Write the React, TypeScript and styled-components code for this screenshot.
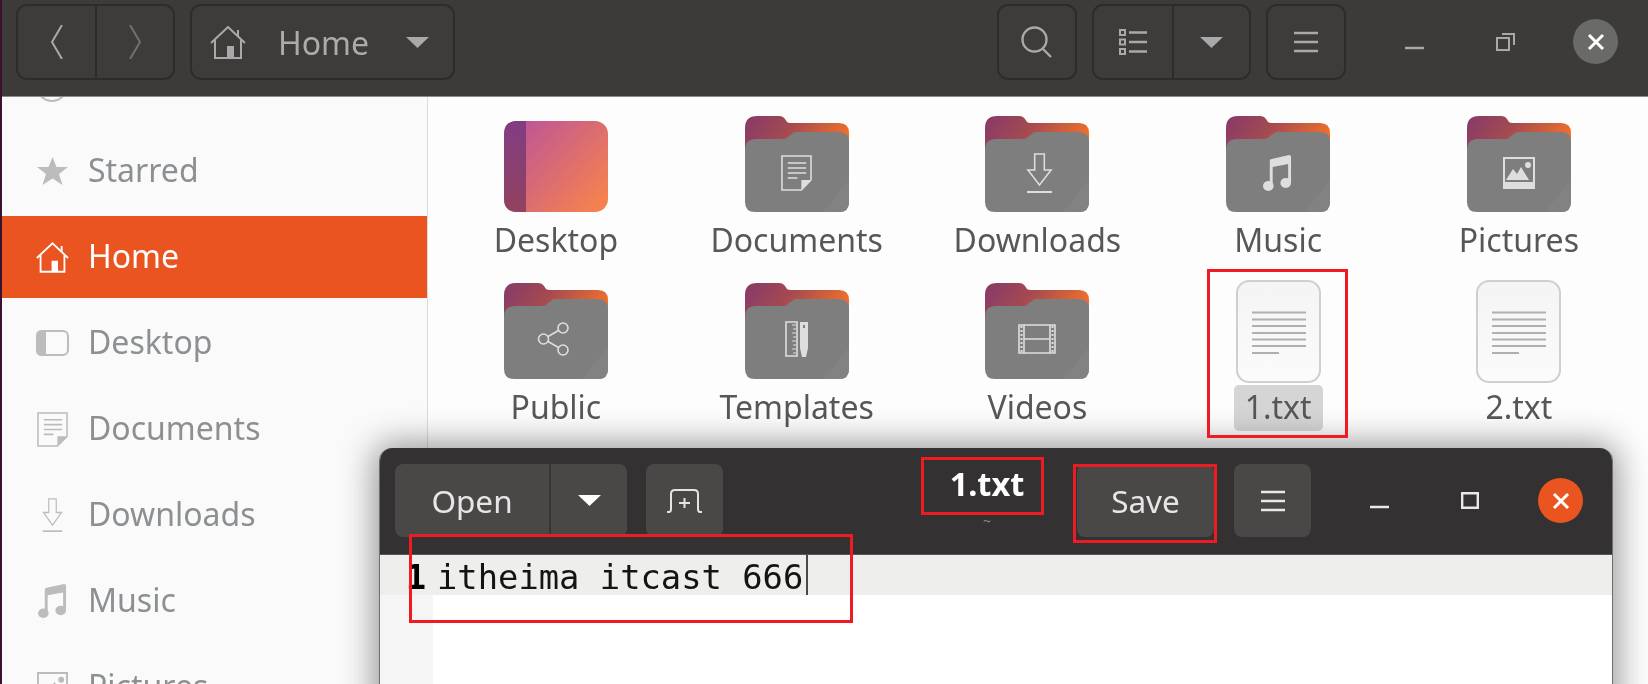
import React from "react";
import styled, { createGlobalStyle } from "styled-components";

const Global = createGlobalStyle`
  html, body { margin: 0; padding: 0; overflow: hidden; background: #fdfdfd; }
  * { box-sizing: border-box; }
`;

const Root = styled.div`
  position: relative;
  width: 1648px;
  height: 684px;
  overflow: hidden;
  display: flex;
  font-family: "Noto Sans", sans-serif;
  filter: blur(0.55px);
`;
const Strip = styled.div`
  width: 2px;
  flex: none;
  background: #3a1230;
`;
const Files = styled.div`
  flex: 1;
  display: flex;
  flex-direction: column;
  min-width: 0;
`;
const Header = styled.header`
  height: 97px;
  flex: none;
  display: flex;
  align-items: flex-start;
  padding: 4px 0 0 14px;
  background: #3d3b39;
  border-bottom: 1px solid #8c8a88;
`;
const ButtonGroup = styled.div<{ $w: number; $ml?: number }>`
  display: flex;
  height: 76px;
  width: ${(p) => p.$w}px;
  margin-left: ${(p) => p.$ml ?? 0}px;
  border: 2px solid #2d2c2a;
  border-radius: 11px;
  background: #3e3c3a;
  overflow: hidden;
`;
const GroupCell = styled.div<{ $w?: number }>`
  ${(p) => (p.$w ? `width: ${p.$w}px; flex: none;` : "flex: 1;")}
  display: flex;
  align-items: center;
  justify-content: center;
  & + & { border-left: 2px solid #2d2c2a; }
`;
const PathButton = styled(ButtonGroup)`
  align-items: center;
  padding-left: 18px;
`;
const PathIcon = styled.span`
  display: flex;
  color: #a9a9a9;
`;
const PathLabel = styled.span`
  margin-left: 32px;
  width: 128px;
  font-size: 32px;
  color: #adabaa;
`;
const Controls = styled.div<{ $ml: number; $mt: number }>`
  display: flex;
  gap: 45.5px;
  margin-left: ${(p) => p.$ml}px;
  margin-top: ${(p) => p.$mt}px;
`;
const Control = styled.div`
  width: 45px;
  height: 45px;
  display: flex;
  align-items: center;
  justify-content: center;
`;
const CloseControl = styled(Control)<{ $bg: string }>`
  border-radius: 50%;
  background: ${(p) => p.$bg};
`;
const Body = styled.div`
  flex: 1;
  display: flex;
  min-height: 0;
`;
const Sidebar = styled.nav`
  width: 426px;
  flex: none;
  overflow: hidden;
  background: #fafafa;
  border-right: 1px solid #dcdcdc;
`;
const SideList = styled.div`
  display: flex;
  flex-direction: column;
  gap: 4px;
  margin-top: -53px;
`;
const SideRow = styled.div<{ $active?: boolean }>`
  height: 82px;
  flex: none;
  display: flex;
  align-items: center;
  gap: 19px;
  padding-left: 33px;
  font-size: 32px;
  background: ${(p) => (p.$active ? "#e95420" : "transparent")};
  color: ${(p) => (p.$active ? "#ffffff" : "#8d9092")};
`;
const SideLabel = styled.span`
  margin-bottom: 4px;
`;
const SideIcon = styled.span<{ $active?: boolean }>`
  width: 34px;
  height: 36px;
  display: flex;
  align-items: center;
  justify-content: center;
  color: ${(p) => (p.$active ? "#ffffff" : "#bcbcbc")};
  flex: none;
`;
const Main = styled.main`
  flex: 1;
  display: grid;
  grid-template-columns: repeat(5, 240.75px);
  grid-auto-rows: 148px;
  row-gap: 19px;
  padding: 19px 0 0 7.5px;
  background: #fdfdfd;
  align-content: start;
`;
const Cell = styled.div`
  display: flex;
  flex-direction: column;
  align-items: center;
`;
const IconBox = styled.div`
  height: 96px;
  display: flex;
  align-items: flex-end;
  justify-content: center;
  flex: none;
`;
const CellLabel = styled.span<{ $selected?: boolean }>`
  margin-top: 6px;
  height: 46px;
  line-height: 43px;
  padding: 0 11px;
  border-radius: 5px;
  font-size: 32px;
  white-space: nowrap;
  color: #555759;
  background: ${(p) => (p.$selected ? "#d5d5d5" : "transparent")};
`;
const Editor = styled.section`
  position: absolute;
  left: 379px;
  top: 448px;
  width: 1234px;
  height: 300px;
  border-radius: 13px 13px 0 0;
  background: #fff;
  border: 1px solid #6f6f6f;
  border-top: none;
  box-shadow: 0 0 34px 4px rgba(0, 0, 0, 0.42);
  display: flex;
  flex-direction: column;
  overflow: hidden;
`;
const EditorHeader = styled.header`
  height: 107px;
  flex: none;
  display: flex;
  align-items: flex-start;
  padding: 16px 0 0 15px;
  background: #333131;
  border-bottom: 1px solid #555;
`;
const EditorButtons = styled.div<{ $w: number; $ml?: number }>`
  width: ${(p) => p.$w}px;
  height: 73px;
  margin-left: ${(p) => p.$ml ?? 0}px;
  display: flex;
  flex: none;
  border-radius: 8px;
  background: #4a4846;
  overflow: hidden;
`;
const EditorCell = styled.div<{ $w?: number }>`
  ${(p) => (p.$w ? `width: ${p.$w}px; flex: none;` : "flex: 1;")}
  display: flex;
  align-items: center;
  justify-content: center;
  font-size: 31.5px;
  color: #e6e6e6;
  & + & { border-left: 2px solid #383635; }
`;
const TitleBlock = styled.div`
  width: 120px;
  margin-left: 204px;
  margin-right: 30px;
  flex: none;
  text-align: center;
`;
const TitleText = styled.div`
  font-size: 32.5px;
  font-weight: 700;
  line-height: 40px;
  color: #ffffff;
`;
const TitleSub = styled.div`
  font-size: 14px;
  line-height: 16px;
  margin-top: 9px;
  color: #8a8a8a;
`;
const EditArea = styled.div`
  flex: 1;
  display: flex;
  font-family: "DejaVu Sans Mono", monospace;
  font-size: 33.8px;
  background: linear-gradient(to right, #f5f5f5 53px, #ffffff 53px);
`;
const CurrentLine = styled.div`
  height: 40px;
  width: 100%;
  display: flex;
  align-items: center;
  background: #eeeeec;
`;
const LineNumber = styled.span`
  width: 57px;
  padding: 4px 11px 0 0;
  flex: none;
  text-align: right;
  font-weight: 700;
  color: #000;
`;
const LineText = styled.span`
  padding-top: 4px;
  color: #141414;
`;
const Cursor = styled.span`
  width: 2px;
  height: 40px;
  margin-left: 3px;
  background: #4a4a4a;
`;
const Mark = styled.div`
  position: absolute;
  border: 3px solid #ed1c24;
`;
const FileMark = styled(Mark)`
  left: 1207px; top: 269px; width: 141px; height: 169px;
`;
const TitleMark = styled(Mark)`
  left: 921px; top: 457px; width: 123px; height: 58px;
`;
const SaveMark = styled(Mark)`
  left: 1073px; top: 464px; width: 144px; height: 79px;
`;
const LineMark = styled(Mark)`
  left: 409px; top: 534px; width: 444px; height: 89px;
`;

type G = "doc" | "down" | "music" | "pic" | "share" | "tpl" | "film";

const glyphBox: Record<G, string> = {
  doc: "0 0 32 36",
  down: "0 0 28 40",
  music: "0 0 30 36",
  pic: "0 0 32 32",
  share: "0 0 33 35",
  tpl: "0 0 23 36",
  film: "0 0 38 30",
};

function GlyphShape({ g }: { g: G }) {
  const s = { fill: "none", stroke: "currentColor", strokeWidth: 1.6 };
  switch (g) {
    case "doc":
      return (
        <g>
          <path {...s} d="M1 1H31V25L21 35H1Z" />
          <path d="M31 25L21 35V25Z" fill="currentColor" />
          <path {...s} d="M7 8H26M7 13H26M7 18H26M7 23H17" />
        </g>
      );
    case "down":
      return (
        <g>
          <path {...s} d="M9 1H19V17H26L14 32L2 17H9Z" />
          <path {...s} strokeWidth={2} d="M1 39H27" />
        </g>
      );
    case "music":
      return (
        <g fill="currentColor">
          <path d="M7 6Q7 4 9 4L27 0Q29 0 29 2V28H26V9L10 12V31H7Z" />
          <ellipse cx="5.5" cy="31" rx="5.5" ry="5" />
          <ellipse cx="23.5" cy="28" rx="5.5" ry="5" />
        </g>
      );
    case "pic":
      return (
        <g fill="currentColor">
          <path fillRule="evenodd" d="M0 0H32V32H0ZM2 2V25H30V2Z" />
          <path d="M3 23L10 12L14 17L18 10L26 23Z" />
          <circle cx="25" cy="8" r="3" />
        </g>
      );
    case "share":
      return (
        <g {...s}>
          <circle cx="26" cy="7" r="5" />
          <circle cx="6.5" cy="18" r="5" />
          <circle cx="26" cy="29" r="5" />
          <path d="M11 15.5L21.5 9.5M11 20.5L21.5 26.5" />
        </g>
      );
    case "tpl":
      return (
        <g>
          <path {...s} d="M1 1H12V35H1Z" />
          <path {...s} strokeWidth={1} d="M7 4H11M8 8H11M7 12H11M8 16H11M7 20H11M8 24H11M7 28H11M8 32H11" />
          <path fill="currentColor" d="M15 1H23V27L21 36H17L15 27ZM18 4V7H20V4Z" fillRule="evenodd" />
        </g>
      );
    case "film":
      return (
        <g>
          <path {...s} d="M6 1H32V29H6ZM6 15H32M1 1H37V29H1Z" />
          <path stroke="currentColor" strokeWidth={2} strokeDasharray="2 2" d="M3.5 2V28M34.5 2V28" fill="none" />
        </g>
      );
  }
}

function Glyph({ g, w, h }: { g: G; w: number; h: number }) {
  return (
    <svg width={w} height={h} viewBox={glyphBox[g]} preserveAspectRatio="none">
      <GlyphShape g={g} />
    </svg>
  );
}

const GlyphPos: Record<G, [number, number, number, number]> = {
  doc: [36, 39, 31, 36],
  down: [41, 37, 27, 40],
  music: [37, 39, 29, 36],
  pic: [36, 41, 32, 32],
  share: [33, 38, 33, 35],
  tpl: [40, 38, 23, 36],
  film: [33, 41, 38, 30],
};

function Folder({ g, id }: { g: G; id: string }) {
  const [x, y, w, h] = GlyphPos[g];
  return (
    <svg width="104" height="96" viewBox="0 0 104 96">
      <defs>
        <linearGradient id={`b${id}`} x1="0" y1="0" x2="1" y2="0.35">
          <stop offset="0" stopColor="#87396b" />
          <stop offset="0.45" stopColor="#a34a50" />
          <stop offset="1" stopColor="#f0702c" />
        </linearGradient>
      </defs>
      <path
        fill={`url(#b${id})`}
        d="M0 40V12Q0 0 12 0H34Q38 0 40 3L42 6Q43 7 46 7H94Q104 7 104 17V50Z"
      />
      <path
        fill="#7e7e7e"
        d="M0 34Q0 23 11 23H38Q42 23 44 20L47 18Q48 16 52 16H94Q104 16 104 26V86Q104 96 94 96H10Q0 96 0 86Z"
      />
      <path fill="#828282" d="M104 64V86Q104 96 94 96H78Z" />
      <svg x={x} y={y} width={w} height={h} viewBox={glyphBox[g]} preserveAspectRatio="none" color="#dedede">
        <GlyphShape g={g} />
      </svg>
    </svg>
  );
}

function DesktopTile() {
  return (
    <svg width="104" height="91" viewBox="0 0 104 91">
      <defs>
        <linearGradient id="dt" x1="0" y1="0" x2="1" y2="0.8">
          <stop offset="0" stopColor="#b7509f" />
          <stop offset="1" stopColor="#f58150" />
        </linearGradient>
        <linearGradient id="ds" x1="0" y1="0" x2="0" y2="1">
          <stop offset="0" stopColor="#813d83" />
          <stop offset="1" stopColor="#91425f" />
        </linearGradient>
      </defs>
      <rect width="104" height="91" rx="13" fill="url(#dt)" />
      <path d="M22 0H13Q0 0 0 13V78Q0 91 13 91H22Z" fill="url(#ds)" />
    </svg>
  );
}

const FileSvg = styled.svg`
  margin-bottom: -4px;
`;

function TextFile() {
  return (
    <FileSvg width="85" height="103" viewBox="0 0 85 103">
      <defs>
        <linearGradient id="tf" x1="0" y1="0" x2="0" y2="1">
          <stop offset="0" stopColor="#f4f4f4" />
          <stop offset="1" stopColor="#fbfbfb" />
        </linearGradient>
      </defs>
      <rect x="1" y="1" width="83" height="101" rx="12" fill="url(#tf)" stroke="#cfcfcf" strokeWidth="2" />
      <path
        stroke="#b0b0b0"
        strokeWidth="2"
        d="M16 32.5H70M16 39.5H70M16 46H70M16 53H70M16 59.5H70M16 66H70M16 73H43"
      />
    </FileSvg>
  );
}

const HomeIcon = ({ w = 36, h = 33 }: { w?: number; h?: number }) => (
  <svg width={w} height={h} viewBox="0 0 36 33" fill="none" stroke="currentColor" strokeWidth="2">
    <path d="M1 17L18 1L35 17M28 4V10M5 14V32H31V14" />
    <path d="M17 20H24V32H17Z" fill="currentColor" stroke="none" />
  </svg>
);

const Chevron = ({ right, color }: { right?: boolean; color: string }) => (
  <svg width="12" height="34" viewBox="0 0 12 34" fill="none" stroke={color} strokeWidth="2">
    <path d={right ? "M1 0L11 17L1 34" : "M11 0L1 17L11 34"} />
  </svg>
);

const Caret = ({ color }: { color: string }) => (
  <svg width="23" height="11" viewBox="0 0 23 11">
    <path d="M0 0H23L11.5 11Z" fill={color} />
  </svg>
);

const Hamburger = ({ color }: { color: string }) => (
  <svg width="24" height="22" viewBox="0 0 24 22" stroke={color} strokeWidth="2.4">
    <path d="M0 2H24M0 11H24M0 20H24" />
  </svg>
);

const SearchIcon = () => (
  <svg width="32" height="32" viewBox="0 0 32 32" fill="none" stroke="#a9a9a9" strokeWidth="2.4">
    <ellipse cx="13.5" cy="13.5" rx="12" ry="12" />
    <path d="M22 23L30 31" />
  </svg>
);

const ListIcon = () => (
  <svg width="28" height="26" viewBox="0 0 28 26" fill="none" stroke="#a9a9a9">
    <path strokeWidth="2" d="M1 1H6V6H1ZM1 10.5H6V15.5H1ZM1 20H6V25H1Z" />
    <path strokeWidth="2.4" d="M10 3.5H28M10 13H28M10 22.5H28" />
  </svg>
);

const Minimize = ({ color, w }: { color: string; w: number }) => (
  <svg width={w} height="22" viewBox={`0 0 ${w} 22`}>
    <path d={`M0 17H${w}`} stroke={color} strokeWidth="2.4" />
  </svg>
);

const Restore = () => (
  <svg width="19" height="18" viewBox="0 0 19 18" fill="none" stroke="#a9a9a9" strokeWidth="2">
    <path d="M1 5H13V17H1ZM6 1H18V12" />
  </svg>
);

const Maximize = () => (
  <svg width="18" height="17" viewBox="0 0 18 17" fill="none" stroke="#e8e8e8" strokeWidth="2.4">
    <path d="M1.2 1.2H16.8V15.8H1.2Z" />
  </svg>
);

const CloseX = () => (
  <svg width="18" height="18" viewBox="0 0 18 18" stroke="#ffffff" strokeWidth="3">
    <path d="M2 2L16 16M16 2L2 16" />
  </svg>
);

const NewTab = () => (
  <svg width="35" height="24" viewBox="0 0 35 24" fill="none" stroke="#e4e4e4" strokeWidth="2">
    <path d="M0 23H2Q4 23 4 20V5Q4 1 8 1H27Q31 1 31 5V20Q31 23 33 23H35" />
    <path d="M17.5 9V19M12 14H23" />
  </svg>
);

const RecentIcon = () => (
  <svg width="32" height="36" viewBox="0 0 32 36" fill="none" stroke="#bcbcbc" strokeWidth="2">
    <circle cx="16" cy="19" r="15" />
  </svg>
);

const StarIcon = () => (
  <svg width="31" height="28" viewBox="0 0 31 28">
    <path fill="currentColor" d="M15.5 0L19.5 10H31L22 17L25.5 28L15.5 21.5L5.5 28L9 17L0 10H11.5Z" />
  </svg>
);

const DesktopIcon = () => (
  <svg width="33" height="26" viewBox="0 0 33 26" fill="none" stroke="currentColor" strokeWidth="2">
    <rect x="1" y="1" width="31" height="24" rx="5" />
    <path d="M1 6Q1 1 6 1H9V25H6Q1 25 1 20Z" fill="currentColor" />
  </svg>
);

const folders: { name: string; g: G | "desktop" }[] = [
  { name: "Desktop", g: "desktop" },
  { name: "Documents", g: "doc" },
  { name: "Downloads", g: "down" },
  { name: "Music", g: "music" },
  { name: "Pictures", g: "pic" },
  { name: "Public", g: "share" },
  { name: "Templates", g: "tpl" },
  { name: "Videos", g: "film" },
];

export default function App() {
  return (
    <>
      <Global />
      <Root>
        <Strip />
        <Files>
          <Header>
            <ButtonGroup $w={159}>
              <GroupCell $w={77}><Chevron color="#a9a9a9" /></GroupCell>
              <GroupCell><Chevron right color="#717171" /></GroupCell>
            </ButtonGroup>
            <PathButton $w={265} $ml={15}>
              <PathIcon><HomeIcon /></PathIcon>
              <PathLabel>Home</PathLabel>
              <Caret color="#a9a9a9" />
            </PathButton>
            <ButtonGroup $w={80} $ml={542}>
              <GroupCell><SearchIcon /></GroupCell>
            </ButtonGroup>
            <ButtonGroup $w={159} $ml={15}>
              <GroupCell $w={78}><ListIcon /></GroupCell>
              <GroupCell><Caret color="#a9a9a9" /></GroupCell>
            </ButtonGroup>
            <ButtonGroup $w={80} $ml={15}>
              <GroupCell><Hamburger color="#a9a9a9" /></GroupCell>
            </ButtonGroup>
            <Controls $ml={46} $mt={15}>
              <Control><Minimize color="#a9a9a9" w={19} /></Control>
              <Control><Restore /></Control>
              <CloseControl $bg="#6a6a69"><CloseX /></CloseControl>
            </Controls>
          </Header>
          <Body>
            <Sidebar>
              <SideList>
                <SideRow><SideIcon><RecentIcon /></SideIcon></SideRow>
                <SideRow><SideIcon><StarIcon /></SideIcon><SideLabel>Starred</SideLabel></SideRow>
                <SideRow $active><SideIcon $active><HomeIcon w={33} h={31} /></SideIcon><SideLabel>Home</SideLabel></SideRow>
                <SideRow><SideIcon><DesktopIcon /></SideIcon><SideLabel>Desktop</SideLabel></SideRow>
                <SideRow><SideIcon><Glyph g="doc" w={31} h={35} /></SideIcon><SideLabel>Documents</SideLabel></SideRow>
                <SideRow><SideIcon><Glyph g="down" w={21} h={34} /></SideIcon><SideLabel>Downloads</SideLabel></SideRow>
                <SideRow><SideIcon><Glyph g="music" w={29} h={34} /></SideIcon><SideLabel>Music</SideLabel></SideRow>
                <SideRow><SideIcon><Glyph g="pic" w={31} h={31} /></SideIcon><SideLabel>Pictures</SideLabel></SideRow>
              </SideList>
            </Sidebar>
            <Main>
              {folders.map((f) => (
                <Cell key={f.name}>
                  <IconBox>
                    {f.g === "desktop" ? <DesktopTile /> : <Folder g={f.g} id={f.name} />}
                  </IconBox>
                  <CellLabel>{f.name}</CellLabel>
                </Cell>
              ))}
              <Cell>
                <IconBox><TextFile /></IconBox>
                <CellLabel $selected>1.txt</CellLabel>
              </Cell>
              <Cell>
                <IconBox><TextFile /></IconBox>
                <CellLabel>2.txt</CellLabel>
              </Cell>
            </Main>
          </Body>
        </Files>

        <Editor>
          <EditorHeader>
            <EditorButtons $w={232}>
              <EditorCell $w={154}>Open</EditorCell>
              <EditorCell><Caret color="#ffffff" /></EditorCell>
            </EditorButtons>
            <EditorButtons $w={77} $ml={19}>
              <EditorCell><NewTab /></EditorCell>
            </EditorButtons>
            <TitleBlock>
              <TitleText>1.txt</TitleText>
              <TitleSub>~</TitleSub>
            </TitleBlock>
            <EditorButtons $w={137}>
              <EditorCell>Save</EditorCell>
            </EditorButtons>
            <EditorButtons $w={77} $ml={20}>
              <EditorCell><Hamburger color="#e8e8e8" /></EditorCell>
            </EditorButtons>
            <Controls $ml={46} $mt={14}>
              <Control><Minimize color="#e8e8e8" w={19} /></Control>
              <Control><Maximize /></Control>
              <CloseControl $bg="#e95420"><CloseX /></CloseControl>
            </Controls>
          </EditorHeader>
          <EditArea>
            <CurrentLine>
              <LineNumber>1</LineNumber>
              <LineText>itheima itcast 666</LineText>
              <Cursor />
            </CurrentLine>
          </EditArea>
        </Editor>

        <FileMark />
        <TitleMark />
        <SaveMark />
        <LineMark />
      </Root>
    </>
  );
}
